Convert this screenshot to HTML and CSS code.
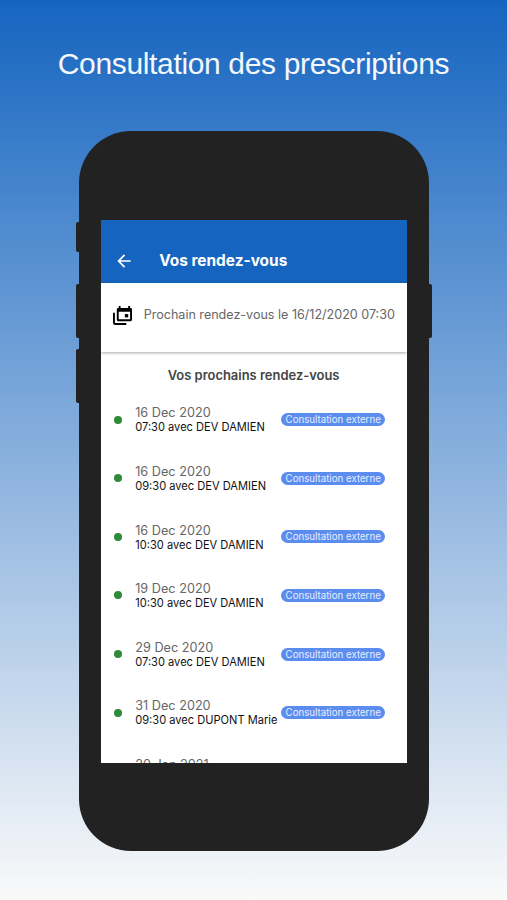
FILE: index.html
```html
<!DOCTYPE html>
<html lang="fr">
<head>
    <meta charset="UTF-8">
    <meta name="viewport" content="width=device-width, initial-scale=1.0">
    <title>Consultation des prescriptions</title>
    <link rel="stylesheet" href="styles.css">
</head>
<body>
    <h1>Consultation des prescriptions</h1>

    <div class="phone">
        <span class="side-button mute"></span>
        <span class="side-button volume-up"></span>
        <span class="side-button volume-down"></span>
        <span class="side-button power"></span>

        <div class="screen">
            <header class="app-bar">
                <svg class="back" viewBox="0 0 24 24"><path d="M20 11H7.83l5.59-5.59L12 4l-8 8 8 8 1.41-1.41L7.83 13H20v-2z"/></svg>
                <h2>Vos rendez-vous</h2>
            </header>

            <div class="next">
                <svg class="calendar" viewBox="0 0 20 20">
                    <path d="M1 7v10.5q0 1.5 1.5 1.5H14" fill="none" stroke="#000" stroke-width="2"/>
                    <path fill-rule="evenodd" d="M6 0h2v2h8V0h2v2h.5Q20 2 20 3.500v11q0 1.500-1.500 1.500h-13Q4 16 4 14.500v-11Q4 2 5.500 2H6zM6 6v8h12V6z"/>
                    <path d="M12.500 8.500h3.500v3.500h-3.500z"/>
                </svg>
                <span>Prochain rendez-vous le 16/12/2020 07:30</span>
            </div>

            <h3>Vos prochains rendez-vous</h3>

            <ul class="appointments">
                <li>
                    <span class="dot"></span>
                    <div class="info"><span class="date">16 Dec 2020</span><span class="detail">07:30 avec DEV DAMIEN</span></div>
                    <span class="badge">Consultation externe</span>
                </li>
                <li>
                    <span class="dot"></span>
                    <div class="info"><span class="date">16 Dec 2020</span><span class="detail">09:30 avec DEV DAMIEN</span></div>
                    <span class="badge">Consultation externe</span>
                </li>
                <li>
                    <span class="dot"></span>
                    <div class="info"><span class="date">16 Dec 2020</span><span class="detail">10:30 avec DEV DAMIEN</span></div>
                    <span class="badge">Consultation externe</span>
                </li>
                <li>
                    <span class="dot"></span>
                    <div class="info"><span class="date">19 Dec 2020</span><span class="detail">10:30 avec DEV DAMIEN</span></div>
                    <span class="badge">Consultation externe</span>
                </li>
                <li>
                    <span class="dot"></span>
                    <div class="info"><span class="date">29 Dec 2020</span><span class="detail">07:30 avec DEV DAMIEN</span></div>
                    <span class="badge">Consultation externe</span>
                </li>
                <li>
                    <span class="dot"></span>
                    <div class="info"><span class="date">31 Dec 2020</span><span class="detail">09:30 avec DUPONT Marie</span></div>
                    <span class="badge">Consultation externe</span>
                </li>
                <li>
                    <div class="info"><span class="date">20 Jan 2021</span></div>
                </li>
            </ul>
        </div>
    </div>
</body>
</html>
```

FILE: styles.css
```css
* {
    box-sizing: border-box;
}
body {
    margin: 0;
    height: 900px;
    overflow: hidden;
    background: linear-gradient(#1565c0, #fafafa);
    font-family: Inter, sans-serif;
    white-space: nowrap;
}
h1 {
    margin: 0;
    padding-top: 44px;
    height: 131px;
    color: #f4f8fd;
    font: 400 30px/40px "Liberation Sans", Arial, sans-serif;
    letter-spacing: -0.35px;
    text-align: center;
}
.phone {
    position: relative;
    width: 350px;
    height: 720px;
    margin-left: 79px;
    padding: 89px 22px 0;
    background: #222;
    border-radius: 52px;
}
.side-button {
    position: absolute;
    left: -3px;
    width: 5px;
    height: 54px;
    background: #222;
    border-radius: 2px;
}
.mute {
    top: 91px;
    height: 30px;
}
.volume-up {
    top: 153px;
}
.volume-down {
    top: 218px;
}
.power {
    top: 153px;
    left: auto;
    right: -3px;
}
.screen {
    height: 543px;
    margin: 0 0.5px 0 -0.3px;
    background: #fff;
    overflow: hidden;
}
.app-bar {
    display: flex;
    align-items: center;
    height: 63.4px;
    padding: 18.6px 13px 0;
    background: #1565c0;
    color: #fff;
}
.back {
    width: 20px;
    height: 20px;
    fill: #fff;
}
h2 {
    margin: 0 0 0 25.5px;
    font-size: 15.4px;
    font-weight: 700;
}
.next {
    display: flex;
    align-items: center;
    height: 69.1px;
    padding: 0 12px 7px;
    box-shadow: 0 1px 3px rgba(0,0,0,0.35);
    color: #666;
    font-size: 12.55px;
}
.calendar {
    flex-shrink: 0;
    width: 19px;
    height: 19px;
    margin: 2px 12px 0 0;
}
h3 {
    margin: 13px 0 0;
    height: 24.9px;
    color: #444;
    font-size: 12.95px;
    line-height: 20px;
    font-weight: 600;
    text-align: center;
}
.appointments {
    margin: 0;
    padding: 0;
    list-style: none;
}
.appointments li {
    display: grid;
    grid-template-columns: 21.5px 146px auto;
    align-items: center;
    justify-content: start;
    height: 58.6px;
    padding-left: 13px;
}
.dot {
    width: 8px;
    height: 8px;
    background: #2e8b37;
    border-radius: 50%;
}
.info {
    grid-column: 2;
    display: flex;
    flex-direction: column;
    height: 30px;
    padding-top: 0.8px;
}
.date {
    color: #666;
    font-size: 12.7px;
    line-height: 15px;
}
.detail {
    color: #111;
    font-size: 11.1px;
    line-height: 15px;
}
.badge {
    width: 104px;
    height: 13px;
    background: #5b8def;
    border-radius: 7px;
    color: #e4edff;
    font-size: 9.7px;
    line-height: 13px;
    text-align: center;
}
```
